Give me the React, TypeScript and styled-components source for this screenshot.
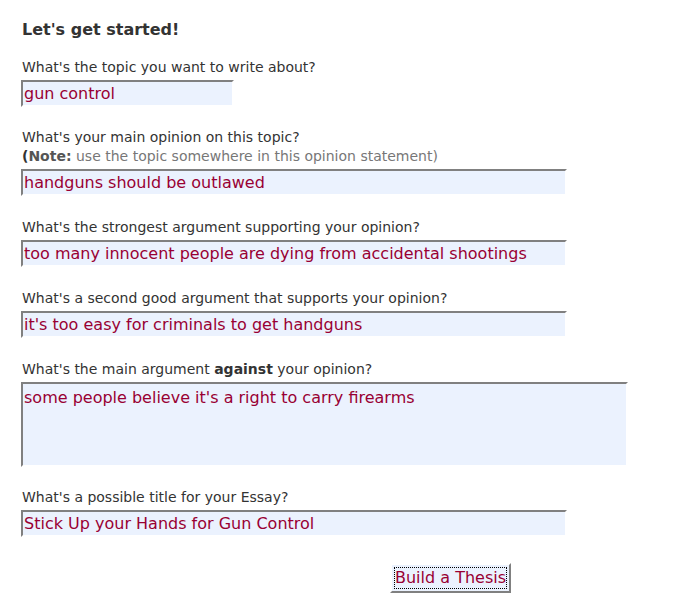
import React from "react";
import styled, { createGlobalStyle } from "styled-components";

const Global = createGlobalStyle`
  html, body { margin: 0; padding: 0; background: #ffffff; }
  body { font-family: "DejaVu Sans", Verdana, sans-serif; color: #333333; }
`;

const Form = styled.form`
  display: flex;
  flex-direction: column;
  padding: 20px 0 0 21px;
  width: 640px;
`;

const Heading = styled.h1`
  margin: 0 0 0 1px;
  font-size: 16px;
  line-height: 20px;
  font-weight: bold;
  color: #333333;
`;

const Field = styled.div<{ $top: number }>`
  display: flex;
  flex-direction: column;
  align-items: flex-start;
  margin-top: ${(p) => p.$top}px;
`;

const Label = styled.label`
  display: block;
  margin-left: 1px;
  font-size: 14px;
  line-height: 19px;
  color: #333333;
`;

const Note = styled.span`
  display: block;
  color: #777777;
  b { color: #555555; }
`;

const Paren = styled.span`
  color: #333333;
  font-weight: bold;
`;

const Input = styled.input<{ $w: number }>`
  box-sizing: border-box;
  width: ${(p) => p.$w}px;
  height: 27px;
  margin-top: 3px;
  padding: 0 0 0 1px;
  border-style: solid;
  border-width: 2px;
  border-color: #808080 #ffffff #ffffff #808080;
  background: #ebf2fe;
  color: #990033;
  font-family: "DejaVu Sans", Verdana, sans-serif;
  font-size: 16px;
  outline: none;
`;

const Area = styled.textarea`
  box-sizing: border-box;
  width: 607px;
  height: 85px;
  margin-top: 3px;
  padding: 4px 0 0 1px;
  border-style: solid;
  border-width: 2px;
  border-color: #808080 #ffffff #ffffff #808080;
  background: #ebf2fe;
  color: #990033;
  font-family: "DejaVu Sans", Verdana, sans-serif;
  font-size: 16px;
  line-height: 19px;
  resize: none;
  outline: none;
`;

const ButtonRow = styled.div`
  display: flex;
  padding-left: 369px;
  margin-top: 26px;
`;

const Button = styled.button`
  box-sizing: border-box;
  height: 30px;
  padding: 1px 2px;
  border-style: solid;
  border-width: 2px;
  border-color: #ffffff #808080 #808080 #ffffff;
  background: #ebf2fe;
  cursor: pointer;
`;

const ButtonInner = styled.span`
  display: block;
  border: 1px dotted #000000;
  color: #990033;
  font-family: "DejaVu Sans", Verdana, sans-serif;
  font-size: 16px;
  line-height: 20px;
  padding: 0;
  white-space: nowrap;
`;

export default function App() {
  return (
    <>
      <Global />
      <Form onSubmit={(e) => e.preventDefault()}>
        <Heading>Let's get started!</Heading>
        <Field $top={18}>
          <Label>What's the topic you want to write about?</Label>
          <Input $w={213} defaultValue="gun control" />
        </Field>
        <Field $top={21}>
          <Label>
            What's your main opinion on this topic?
            <Note>
              <Paren>(</Paren>
              <b>Note:</b> use the topic somewhere in this opinion statement)
            </Note>
          </Label>
          <Input $w={546} defaultValue="handguns should be outlawed" />
        </Field>
        <Field $top={22}>
          <Label>What's the strongest argument supporting your opinion?</Label>
          <Input $w={546} defaultValue="too many innocent people are dying from accidental shootings" />
        </Field>
        <Field $top={22}>
          <Label>What's a second good argument that supports your opinion?</Label>
          <Input $w={546} defaultValue="it's too easy for criminals to get handguns" />
        </Field>
        <Field $top={22}>
          <Label>
            What's the main argument <b>against</b> your opinion?
          </Label>
          <Area defaultValue="some people believe it's a right to carry firearms" />
        </Field>
        <Field $top={21}>
          <Label>What's a possible title for your Essay?</Label>
          <Input $w={546} defaultValue="Stick Up your Hands for Gun Control" />
        </Field>
        <ButtonRow>
          <Button type="submit">
            <ButtonInner>Build a Thesis</ButtonInner>
          </Button>
        </ButtonRow>
      </Form>
    </>
  );
}
